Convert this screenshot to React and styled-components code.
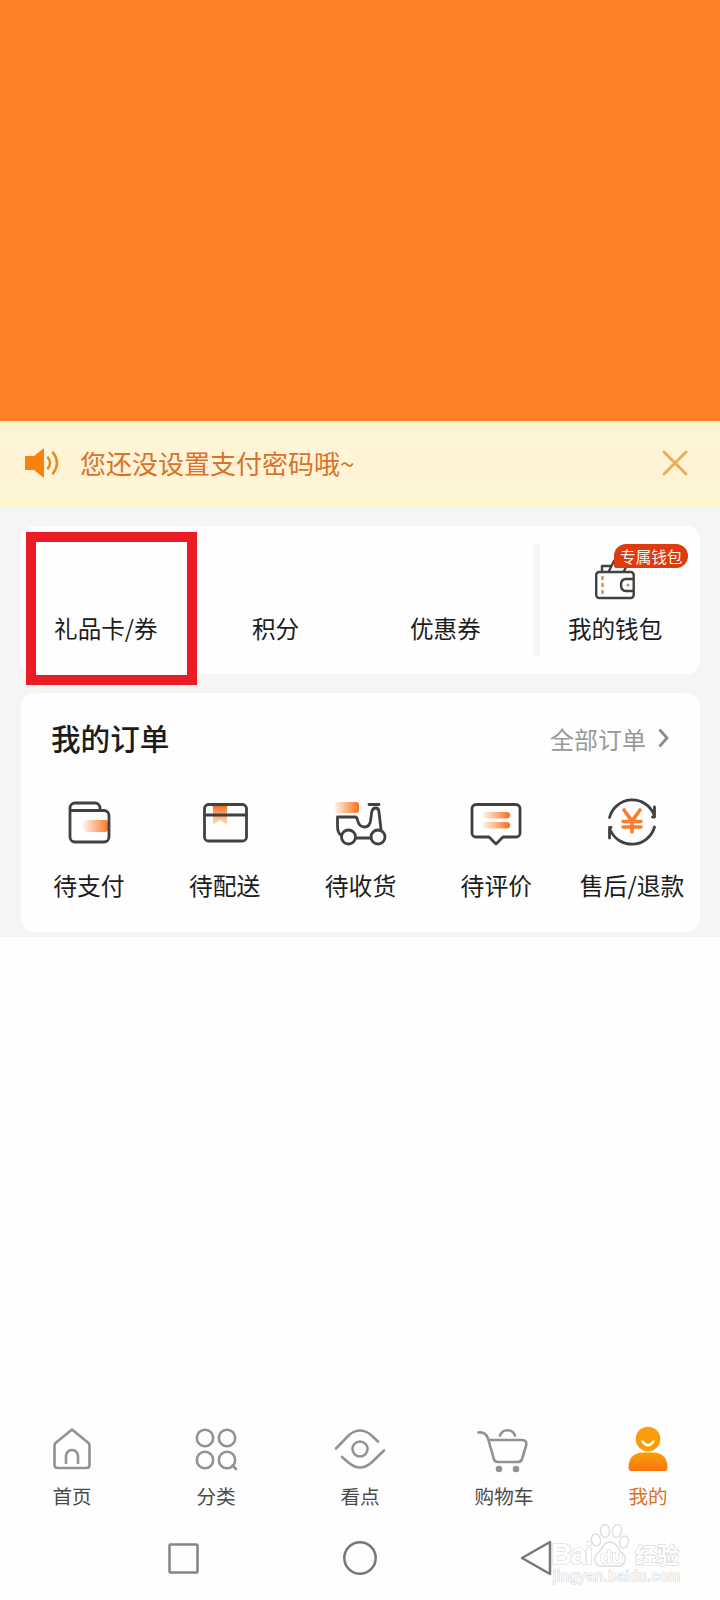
import styled, { createGlobalStyle } from "styled-components";

const GlobalStyle = createGlobalStyle`
  * {
    box-sizing: border-box;
  }

  body {
    margin: 0;
    background: #fefefe;
    font-family: "Noto Sans CJK SC", sans-serif;
    color: #1c1c1c;
  }

  svg {
    display: block;
    overflow: visible;
  }
`;

const Page = styled.div`
  display: flex;
  flex-direction: column;
  width: 720px;
  height: 1600px;
  overflow: hidden;
`;

const Banner = styled.header`
  height: 421px;
  flex: none;
  background: #ff8027;
`;

const Notice = styled.div`
  display: flex;
  align-items: center;
  height: 86px;
  flex: none;
  padding: 0 32px 2px 24px;
  background: linear-gradient(#fdf4cb, #fef4d6 20%, #fef5d5 80%, #fcf6cd);
`;

const NoticeText = styled.p`
  flex: 1;
  margin: 0 0 0 20px;
  font-size: 26px;
  line-height: 38px;
  color: #d9722a;
`;

const Content = styled.main`
  display: flex;
  flex-direction: column;
  gap: 19px;
  height: 430px;
  flex: none;
  padding: 19px 20px 5px 21px;
  background: #f5f5f6;
`;

const Panel = styled.section`
  height: ${(props) => props.$height}px;
  border-radius: 14px;
  background: #fefefe;
`;

const Assets = styled(Panel)`
  display: grid;
  grid-template-columns: repeat(4, 1fr);
`;

const Asset = styled.div`
  position: relative;
  display: flex;
  flex-direction: column;
  align-items: center;
  justify-content: flex-end;
  padding-bottom: 29px;
  font-size: 23.6px;
  line-height: 34px;
`;

const Highlight = styled.div`
  position: absolute;
  top: 6px;
  left: 5px;
  width: 171px;
  height: 153px;
  border: 10px solid #ea1c25;
`;

const Divider = styled.i`
  position: absolute;
  top: 18px;
  left: 3px;
  width: 7px;
  height: 112px;
  background: #f6f6f6;
`;

const WalletIcon = styled.div`
  margin-bottom: 11px;
`;

const Badge = styled.span`
  position: absolute;
  top: 18px;
  left: 84px;
  width: 74px;
  height: 24px;
  border-radius: 12px 12px 12px 2px;
  background: #dc3c10;
  color: #fff3e6;
  font-size: 15.6px;
  line-height: 24px;
  text-align: center;
  white-space: nowrap;
`;

const OrdersHeader = styled.div`
  display: flex;
  align-items: center;
  justify-content: space-between;
  height: 90px;
  padding: 0 31px 0 30px;
`;

const OrdersTitle = styled.h2`
  margin: 0;
  font-size: 29.6px;
  font-weight: 500;
  line-height: 44px;
`;

const AllOrders = styled.div`
  display: flex;
  align-items: center;
  gap: 12px;
  font-size: 24px;
  color: #999;
`;

const OrderList = styled.div`
  display: grid;
  grid-template-columns: repeat(5, 1fr);
`;

const Order = styled.div`
  display: flex;
  flex-direction: column;
  align-items: center;
  gap: 15px;
  padding-top: 13px;
  font-size: 23.8px;
  line-height: 36px;
  white-space: nowrap;
`;

const Spacer = styled.div`
  flex: 1;
`;

const TabBar = styled.nav`
  display: grid;
  grid-template-columns: repeat(5, 1fr);
  height: 90px;
  flex: none;
`;

const Tab = styled.div`
  display: flex;
  flex-direction: column;
  align-items: center;
  gap: 7px;
  font-size: 19.6px;
  line-height: 30px;
  color: ${(props) => (props.$active ? "#d9721f" : "#4a4a4a")};
`;

const SystemBar = styled.div`
  position: relative;
  display: flex;
  align-items: center;
  justify-content: center;
  gap: 143px;
  height: 84px;
  flex: none;
`;

const Watermark = styled.svg`
  position: absolute;
  top: 2px;
  left: 545px;
`;

const darkLine = {
  fill: "none",
  stroke: "#414141",
  strokeWidth: 2.8,
  strokeLinejoin: "round",
  strokeLinecap: "round",
};

const greyLine = {
  fill: "none",
  stroke: "#929292",
  strokeWidth: 2.6,
  strokeLinejoin: "round",
  strokeLinecap: "round",
};

// Order icons share a 56x56 canvas
function OrderIcon({ name }) {
  return (
    <svg width="56" height="56" viewBox="0 0 56 56">
      <defs>
        <linearGradient id="fadeLeft">
          <stop offset="0" stopColor="#ff7a26" stopOpacity="0.1" />
          <stop offset="1" stopColor="#f96d16" />
        </linearGradient>
        <linearGradient id="fadeDown" x2="0" y2="1">
          <stop offset="0" stopColor="#ef6a17" />
          <stop offset="1" stopColor="#ff9a55" stopOpacity="0.35" />
        </linearGradient>
      </defs>
      {name === "pay" && (
        <>
          <rect x="22" y="24" width="27" height="12" rx="5" fill="url(#fadeLeft)" />
          <g {...darkLine}>
            <path d="M9 14.5h34a5 5 0 0 1 5 5V41a5 5 0 0 1-5 5H14a5 5 0 0 1-5-5V12a5 5 0 0 1 5-5h20a5 5 0 0 1 5 5v2" />
          </g>
        </>
      )}
      {name === "ship" && (
        <>
          <path d="M16 9h14v20l-7-5-7 5z" fill="url(#fadeDown)" />
          <g {...darkLine}>
            <rect x="7.5" y="8.5" width="42" height="36.500" rx="4" />
            <path d="M8 19h41" />
          </g>
        </>
      )}
      {name === "receive" && (
        <>
          <rect x="3" y="6" width="24" height="11" rx="3" fill="url(#fadeLeft)" />
          <g {...darkLine}>
            <circle cx="16.500" cy="41" r="7" />
            <circle cx="46" cy="41" r="7" />
            <path d="M9 39Q5.500 37 5.500 30v-9H23q2 0 2.500 3 1.500 7 7 7 5 0 6-6l1.200-9q.8-4 4-4 3 0 3.300 4l2 17.500M24 42h15M37 8.500h10" />
          </g>
        </>
      )}
      {name === "review" && (
        <>
          <rect x="15" y="16" width="27" height="6.500" rx="3" fill="url(#fadeLeft)" />
          <rect x="15" y="26" width="27" height="6.500" rx="3" fill="url(#fadeLeft)" />
          <path
            {...darkLine}
            d="M8 8.500h40a4 4 0 0 1 4 4V37a4 4 0 0 1-4 4H35l-7 7-7-7H8a4 4 0 0 1-4-4V12.500a4 4 0 0 1 4-4z"
          />
        </>
      )}
      {name === "refund" && (
        <>
          <path
            d="M20 14l8 11 8-11M28 25v11M19 25.500h18M19 31h18"
            fill="none"
            stroke="#fb7d2b"
            strokeWidth="3.6"
            strokeLinecap="round"
          />
          <g {...darkLine}>
            <path d="M5.500 21.500a23.500 23.500 0 0 1 44.500-3M50.500 11v10h-2M50.500 31a23.500 23.500 0 0 1-44 3.500M5.500 42V31.500h1.500" />
          </g>
        </>
      )}
    </svg>
  );
}

function TabIcon({ name }) {
  return (
    <svg width="56" height="48" viewBox="0 0 56 48">
      <g {...greyLine}>
        {name === "home" && (
          <>
            <path d="M28 3.500 44.500 17q1 1 1 3v19q0 3-3 3h-29q-3 0-3-3V20q0-2 1-3z" />
            <path d="M22 37v-7a6 6 0 0 1 12 0v7" />
          </>
        )}
        {name === "category" && (
          <>
            <circle cx="17" cy="12" r="8.200" />
            <circle cx="39" cy="12" r="8.200" />
            <circle cx="17" cy="34" r="8.200" />
            <circle cx="39" cy="34" r="8.200" />
            <path d="M44.500 39.500l3.500 3.500" />
          </>
        )}
        {name === "discover" && (
          <>
            <circle cx="28" cy="23" r="7.500" />
            <path d="M4 22.500 17 9q11-9 22 0l7 6.500M52 24.500 39 37q-11 9-22 0l-7-6" />
          </>
        )}
        {name === "cart" && (
          <>
            <path d="M2.500 6.500q7-1 9.500 6l6 21q1 2.500 4 2.500h20q3 0 4-3l4-13q1.500-6-4-6H13" />
            <path d="M24 9.500a8 8 0 0 1 15 0" />
            <circle cx="23" cy="43" r="2" fill="#929292" />
            <circle cx="40" cy="43" r="2" fill="#929292" />
          </>
        )}
      </g>
      {name === "mine" && (
        <>
          <defs>
            <linearGradient id="person" x2="0" y2="1">
              <stop offset="0" stopColor="#f9a000" />
              <stop offset="1" stopColor="#fa7410" />
            </linearGradient>
          </defs>
          <circle cx="28" cy="13" r="12.300" fill="#f99c0b" />
          <path d="M22.500 15.500q5.500 7.500 11 0" fill="none" stroke="#fff" strokeWidth="2.500" strokeLinecap="round" />
          <path d="M8.500 42q0-15 14-15.500h11Q47.500 27 47.500 42q0 3-3 3h-33q-3 0-3-3z" fill="url(#person)" />
        </>
      )}
    </svg>
  );
}

const orders = [
  { icon: "pay", label: "待支付" },
  { icon: "ship", label: "待配送" },
  { icon: "receive", label: "待收货" },
  { icon: "review", label: "待评价" },
  { icon: "refund", label: "售后/退款" },
];

const tabs = [
  { icon: "home", label: "首页" },
  { icon: "category", label: "分类" },
  { icon: "discover", label: "看点" },
  { icon: "cart", label: "购物车" },
  { icon: "mine", label: "我的" },
];

function App() {
  return (
    <Page>
      <GlobalStyle />
      <Banner />
      <Notice>
        <svg width="36" height="30" viewBox="0 0 36 30">
          <path d="M1 8h9L20 0v30L10 22H1z" fill="#f8820d" />
          <path
            d="M24 9.500q4 5.500 0 11M29 4.500q8 10.500 0 21"
            fill="none"
            stroke="#e68a25"
            strokeWidth="2.500"
            strokeLinecap="round"
          />
        </svg>
        <NoticeText>您还没设置支付密码哦~</NoticeText>
        <svg width="26" height="26" viewBox="0 0 26 26">
          <path d="M2 2l22 22M24 2 2 24" stroke="#e9ad5c" strokeWidth="3" strokeLinecap="round" />
        </svg>
      </Notice>

      <Content>
        <Assets $height={148}>
          <Asset>
            礼品卡/券
            <Highlight />
          </Asset>
          <Asset>积分</Asset>
          <Asset>优惠券</Asset>
          <Asset>
            <Divider />
            <WalletIcon>
              <svg width="40" height="40" viewBox="0 0 40 40">
                <g {...darkLine} strokeWidth="2.4">
                  <path d="M7 11V6h9M14 11 19 1M29 11l3-6" />
                  <rect x="1.200" y="12" width="37.500" height="26" rx="3" />
                  <path d="M38 19h-7q-5 0-5 6t5 6h7" />
                </g>
                <path d="M7.500 16v20" stroke="#c99559" strokeWidth="2.400" strokeDasharray="4 3" />
                <circle cx="33" cy="25" r="1.500" fill="#d08a45" />
              </svg>
            </WalletIcon>
            我的钱包
            <Badge>专属钱包</Badge>
          </Asset>
        </Assets>

        <Panel $height={239}>
          <OrdersHeader>
            <OrdersTitle>我的订单</OrdersTitle>
            <AllOrders>
              全部订单
              <svg width="11" height="20" viewBox="0 0 11 20">
                <path d="M1.500 1.500 9 10l-7.500 8.500" fill="none" stroke="#8c8c8c" strokeWidth="2.800" />
              </svg>
            </AllOrders>
          </OrdersHeader>
          <OrderList>
            {orders.map((order) => (
              <Order key={order.icon}>
                <OrderIcon name={order.icon} />
                {order.label}
              </Order>
            ))}
          </OrderList>
        </Panel>
      </Content>

      <Spacer />

      <TabBar>
        {tabs.map((tab) => (
          <Tab key={tab.icon} $active={tab.icon === "mine"}>
            <TabIcon name={tab.icon} />
            {tab.label}
          </Tab>
        ))}
      </TabBar>

      <SystemBar>
        <svg width="34" height="34" viewBox="0 0 34 34">
          <rect x="3.500" y="3.500" width="28" height="28" rx="1" fill="none" stroke="#858585" strokeWidth="2.500" />
        </svg>
        <svg width="34" height="34" viewBox="0 0 34 34">
          <circle cx="17" cy="17" r="15.700" fill="none" stroke="#777" strokeWidth="2.500" />
        </svg>
        <svg width="34" height="34" viewBox="0 0 34 34">
          <path d="M2 17 30 1v32z" fill="none" stroke="#777" strokeWidth="2.500" strokeLinejoin="round" />
        </svg>
        <Watermark width="150" height="68" viewBox="0 0 150 68">
          <g fill="#fff" stroke="#dcdcdc" strokeWidth="1.300">
            <ellipse cx="51" cy="22" rx="4.500" ry="6" transform="rotate(-15 51 22)" />
            <ellipse cx="60" cy="13" rx="4.500" ry="6.500" />
            <ellipse cx="72" cy="13" rx="4.500" ry="6.500" transform="rotate(10 72 13)" />
            <ellipse cx="79" cy="24" rx="4.500" ry="6" transform="rotate(15 79 24)" />
            <path d="M65 24c7 0 7 7 13 12 4 4 2 12-4 12H56c-6 0-8-8-4-12 6-5 6-12 13-12z" />
          </g>
          <g fill="#fff" stroke="#d5d5d5" strokeWidth="1.200" paintOrder="stroke">
            <text x="6" y="46" fontSize="30" fontFamily="Liberation Sans, sans-serif" fontWeight="700" textLength="42">
              Bai
            </text>
            <text x="55" y="45" fontSize="19" fontFamily="Liberation Sans, sans-serif" fontWeight="700">
              du
            </text>
            <text x="90" y="45" fontSize="22" fontWeight="700">
              经验
            </text>
            <text x="8" y="63" fontSize="14" fontFamily="Liberation Sans, sans-serif" textLength="127">
              jingyan.baidu.com
            </text>
          </g>
        </Watermark>
      </SystemBar>
    </Page>
  );
}

export default App;
